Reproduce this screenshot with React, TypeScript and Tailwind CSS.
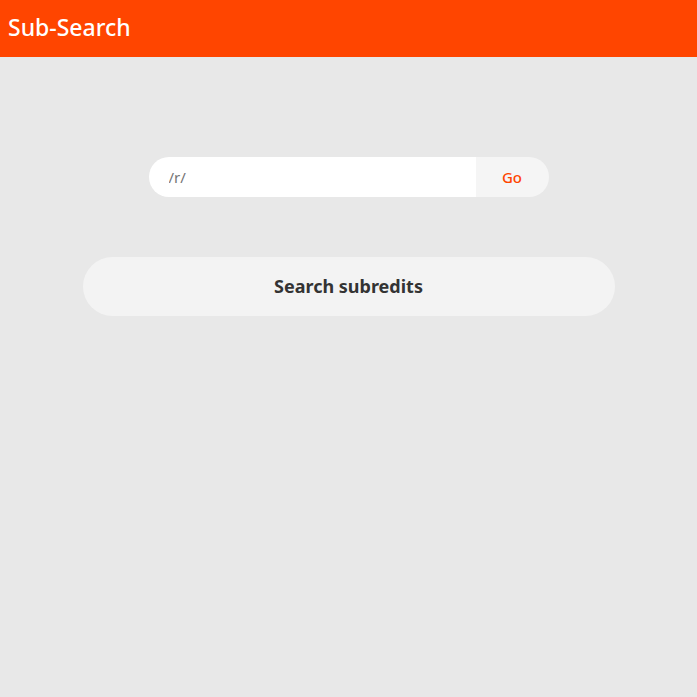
import React, { useState } from 'react';

const App: React.FC = () => {
    const [query, setQuery] = useState('');

    return (
        <div className="min-h-screen bg-[#e8e8e8] font-['Noto_Sans',sans-serif]">
            <header className="h-[57px] bg-[#ff4500] flex items-center px-2 pb-[3px]">
                <h1 className="text-white text-[23px] font-medium leading-none">Sub-Search</h1>
            </header>

            <main className="flex flex-col items-center">
                <div className="mt-[100px] w-[400px] h-[40px] flex rounded-full overflow-hidden">
                    <input
                        type="text"
                        value={query}
                        onChange={(e) => setQuery(e.target.value)}
                        placeholder="/r/"
                        className="flex-1 bg-white pl-5 text-[15px] text-[#333] placeholder:text-[#757575] outline-none"
                    />
                    <button className="w-[73px] bg-[#f5f5f5] text-[#ff4500] font-medium text-[15px]">Go</button>
                </div>

                <button className="mt-[60px] w-[532px] h-[59px] rounded-full bg-[#f3f3f3] text-[#333] font-bold text-[18px]">
                    Search subredits
                </button>
            </main>
        </div>
    );
};

export default App;
